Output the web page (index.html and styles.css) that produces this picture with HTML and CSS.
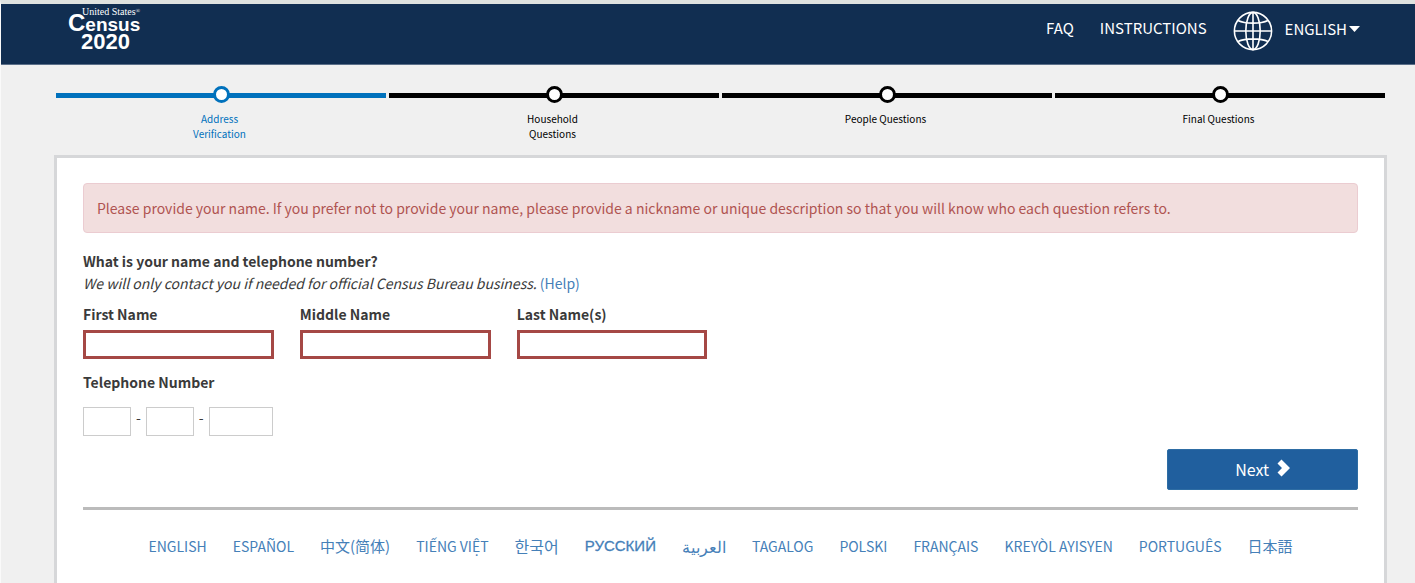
FILE: index.html
```html
<!DOCTYPE html>
<html lang="en">
<head>
<meta charset="utf-8">
<meta name="viewport" content="width=device-width, initial-scale=1">
<title>2020 Census</title>
<link rel="stylesheet" href="styles.css">
</head>
<body>
<header class="topbar">
  <svg class="logo" width="80" height="48" viewBox="0 0 80 48" role="img" aria-label="United States Census 2020">
    <text class="logo-small" x="13" y="8">United States<tspan class="logo-mark" dy="-2">®</tspan></text>
    <text class="logo-big" x="-1" y="24"><tspan class="logo-cap">C</tspan>ensus</text>
    <text class="logo-year" x="12" y="42">2020</text>
  </svg>
  <nav class="topnav">
    <a href="#faq">FAQ</a>
    <a href="#instructions">INSTRUCTIONS</a>
    <button class="language" type="button">
      <svg class="globe" width="40" height="40" viewBox="0 0 40 40" fill="none" stroke="#fff" stroke-width="1.6" aria-hidden="true">
        <circle cx="20" cy="20" r="18.600"/>
        <ellipse cx="20" cy="20" rx="7.200" ry="18.600"/>
        <path d="M20 1.400v37.200M1.400 20h37.200M5 9.500C12 13 28 13 35 9.500M5 30.500C12 27 28 27 35 30.500"/>
      </svg>
      <span>ENGLISH</span>
      <svg class="caret" width="11" height="6" viewBox="0 0 11 6" fill="#fff" aria-hidden="true"><path d="M0 0h11L5.500 6z"/></svg>
    </button>
  </nav>
</header>
<main class="page">
  <ol class="steps">
    <li class="step active"><span class="dot"></span><span class="step-label">Address Verification</span></li>
    <li class="step"><span class="dot"></span><span class="step-label">Household Questions</span></li>
    <li class="step"><span class="dot"></span><span class="step-label">People Questions</span></li>
    <li class="step"><span class="dot"></span><span class="step-label">Final Questions</span></li>
  </ol>
  <section class="card">
    <div class="alert" role="alert">Please provide your name. If you prefer not to provide your name, please provide a nickname or unique description so that you will know who each question refers to.</div>
    <form class="form">
      <h1 class="question">What is your name and telephone number?</h1>
      <p class="hint"><em>We will only contact you if needed for official Census Bureau business.</em> <a href="#help">(Help)</a></p>
      <div class="names">
        <label class="field">First Name<input class="text error" type="text"></label>
        <label class="field">Middle Name<input class="text error" type="text"></label>
        <label class="field">Last Name(s)<input class="text error" type="text"></label>
      </div>
      <fieldset class="phone">
        <legend>Telephone Number</legend>
        <div class="phone-row">
          <input class="text area" type="text" maxlength="3" aria-label="Area code">
          <span>-</span>
          <input class="text area" type="text" maxlength="3" aria-label="Prefix">
          <span>-</span>
          <input class="text line" type="text" maxlength="4" aria-label="Line number">
        </div>
      </fieldset>
      <div class="actions">
        <button class="next" type="button">Next
          <svg class="chevron" width="13" height="18" viewBox="0 0 13 18" fill="#fff" aria-hidden="true"><path d="M4.500 .5L13 9 4.500 17.500.500 13.500 5 9 .500 4.500z"/></svg>
        </button>
      </div>
    </form>
    <nav class="languages" aria-label="Languages">
      <a href="#en">ENGLISH</a>
      <a href="#es">ESPAÑOL</a>
      <a href="#zh" lang="zh" class="large">中文(简体)</a>
      <a href="#vi" lang="vi">TIẾNG VIỆT</a>
      <a href="#ko" lang="ko" class="korean">한국어</a>
      <a href="#ru" lang="ru" class="cyrillic">РУССКИЙ</a>
      <a href="#ar" lang="ar" class="arabic">العربية</a>
      <a href="#tl">TAGALOG</a>
      <a href="#pl">POLSKI</a>
      <a href="#fr">FRANÇAIS</a>
      <a href="#ht">KREYÒL AYISYEN</a>
      <a href="#pt">PORTUGUÊS</a>
      <a href="#ja" lang="ja" class="large">日本語</a>
    </nav>
  </section>
</main>
</body>
</html>
```
FILE: styles.css
```css
* { box-sizing: border-box; }

body {
  margin: 0;
  min-height: 100vh;
  display: flex;
  flex-direction: column;
  border-top: 4px solid #dfe2df;
  border-left: 1px solid #fafafa;
  background: #f0f0f0;
  color: #3a3a3a;
  font: 14px/20px "Noto Sans CJK SC", "Noto Sans", sans-serif;
}

a { color: #4580b8; text-decoration: none; }
button, input { font: inherit; }

.topbar {
  display: flex;
  justify-content: space-between;
  align-items: center;
  height: 61px;
  padding: 0 55px 7px 68px;
  background: #112e51;
  border-bottom: 1px solid #5b6f89;
}
.logo { fill: #fff; overflow: visible; }
.logo-small { font: 10px "Liberation Serif", serif; }
.logo-mark { font-size: 6px; }
.logo-big { font: bold 19px "Liberation Sans", sans-serif; }
.logo-cap { font-size: 24px; }
.logo-year { font: bold 22px "Liberation Sans", sans-serif; }

.topnav {
  display: flex;
  align-items: center;
  gap: 26px;
  color: #fff;
  font-size: 15px;
}
.topnav a { padding-bottom: 5px; color: #fff; }
.language {
  display: flex;
  align-items: center;
  padding: 0;
  border: 0;
  background: none;
  color: #fff;
}
.language span { padding-bottom: 4px; }
.globe { margin-right: 12px; }
.caret { margin: 0 0 4px 2px; }

.page {
  flex: 1;
  display: flex;
  flex-direction: column;
  padding: 20px 28px 0 53px;
}

.steps {
  display: grid;
  grid-template-columns: repeat(4, 1fr);
  gap: 3px;
  margin: 0 2px;
  padding: 0;
  list-style: none;
  min-height: 70px;
}
.step {
  display: flex;
  flex-direction: column;
  align-items: center;
  gap: 8px;
  color: #000;
  background: linear-gradient(currentColor, currentColor) 0 8px / 100% 5px no-repeat;
}
.step.active { color: #0071bc; }
.dot {
  width: 17px;
  height: 17px;
  margin-top: 1px;
  border: 3px solid currentColor;
  border-radius: 50%;
  background: #fff;
}
.step-label {
  max-width: 88px;
  margin-right: 3px;
  font-size: 10px;
  line-height: 15px;
  text-align: center;
}

.card {
  flex: 1;
  padding: 25px 26px 24px;
  border: 3px solid #d6d7d9;
  border-bottom: 0;
  background: #fff;
}
.alert {
  padding: 14px 13px;
  border: 1px solid #ebccd1;
  border-radius: 4px;
  background: #f2dede;
  color: #b05451;
}
.question { margin: 17px 0 0; font-size: 14px; line-height: 22px; }
.hint { margin: 0; line-height: 22px; }

.names {
  display: grid;
  grid-template-columns: repeat(6, 1fr);
  gap: 26px;
  margin-top: 10px;
}
.field { display: flex; flex-direction: column; gap: 6px; font-weight: bold; }
.text {
  width: 100%;
  height: 29px;
  padding: 2px 6px;
  border: 1px solid #ccc;
  border-radius: 0;
  background: #fff;
}
.error { border: 3px solid #a54845; }

.phone { margin: 13px 0 0; padding: 0; border: 0; }
.phone legend { padding: 0; font-weight: bold; }
.phone-row { display: flex; gap: 5px; margin-top: 15px; }
.area { width: 48px; }
.line { width: 64px; }

.actions {
  display: grid;
  grid-template-columns: repeat(6, 1fr);
  gap: 26px;
  margin-top: 13px;
}
.next {
  grid-column: 6;
  display: flex;
  align-items: center;
  justify-content: center;
  gap: 8px;
  height: 41px;
  padding: 0 0 2px;
  border: 1px solid #2e6da4;
  border-radius: 2px;
  background: #205f9e;
  color: #fff;
  font-size: 16px;
}
.chevron { margin-bottom: 2px; }

.languages {
  display: flex;
  flex-wrap: wrap;
  justify-content: center;
  align-items: center;
  gap: 26px;
  margin-top: 17px;
  padding-top: 26px;
  border-top: 3px solid #bbb;
}
.large { font-size: 15px; }
.korean, .arabic { font-size: 16px; }
.cyrillic { font-family: "Liberation Sans", sans-serif; font-size: 15px; -webkit-text-stroke: 0.3px; }
```
